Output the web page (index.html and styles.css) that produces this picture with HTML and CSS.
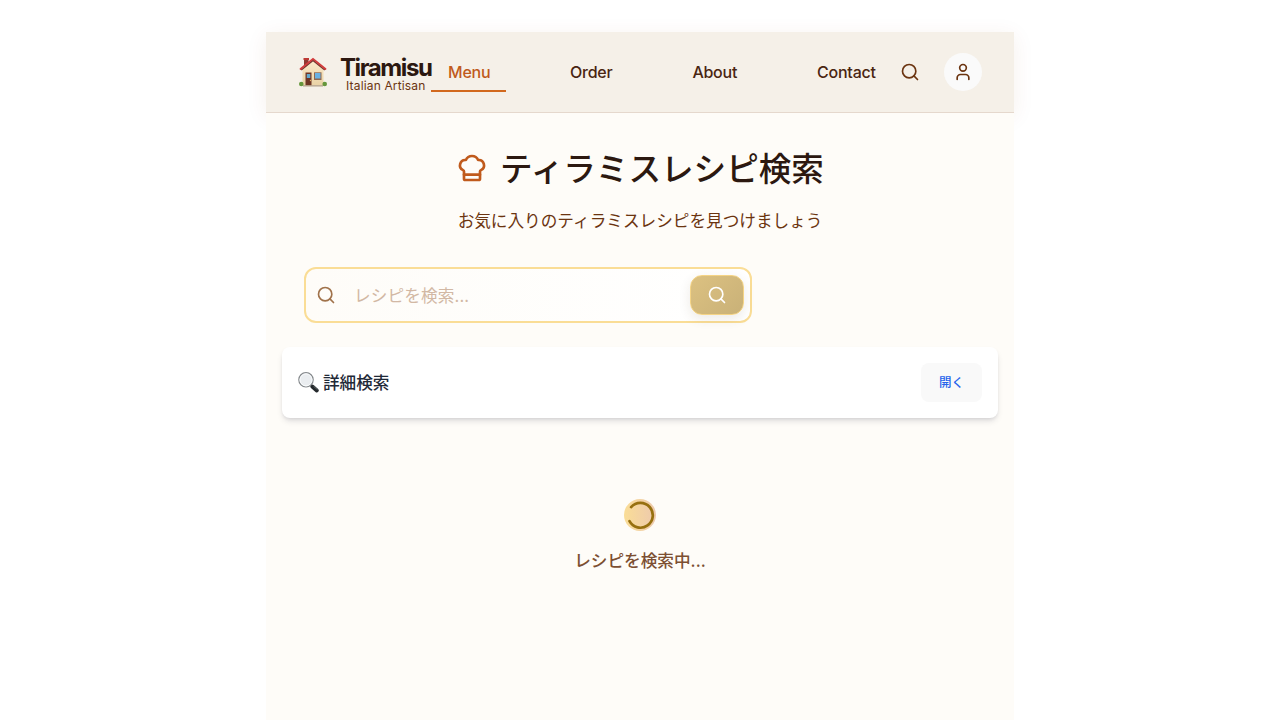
FILE: index.html
```html
<!DOCTYPE html>
<html lang="ja">
<head>
<meta charset="utf-8">
<title>Tiramisu</title>
<link rel="stylesheet" href="styles.css">
</head>
<body>
<div class="page">
  <header class="header">
    <div class="brand">
      <svg class="house" viewBox="0 0 28 30">
        <defs><linearGradient id="wall" x2="0" y2="1"><stop stop-color="#fbeacb"/><stop offset="1" stop-color="#e9d2a5"/></linearGradient></defs>
        <path d="M5 1.500h4.500v8H5z" fill="#8f3a32"/><path d="M4.500 1h5.500v2H4.500z" fill="#bd3a35"/>
        <path d="M3.500 12 14 3l10.500 9v16.500h-21z" fill="url(#wall)"/>
        <path d="M2.200 13 14 3.500 25.800 13" fill="none" stroke="#74372f" stroke-width="1.500"/>
        <path d="M1.500 12 14 1.800 26.500 12" fill="none" stroke="#d23c3c" stroke-width="1.800" stroke-linecap="round"/>
        <path d="M6.500 15.500h6v13h-6z" fill="#6e3525"/><path d="M7.800 17h3.500v4H7.800z" fill="#62a9cf"/><circle cx="11.500" cy="23.500" r=".7" fill="#e6b064"/>
        <path d="M15 15.300h7.500v7.700H15z" fill="#8e674f"/><path d="M16 16h5.500v5.500H16z" fill="#67b0e4"/>
        <path d="M4 28.200h20v1.300H4z" fill="#b3a28b"/>
        <circle cx="2.300" cy="27" r="2.300" fill="#65963c"/><circle cx="25.700" cy="27" r="2.300" fill="#65963c"/>
      </svg>
      <div class="brand-text"><span class="name">Tiramisu</span><span class="tagline">Italian Artisan</span></div>
    </div>
    <nav class="nav">
      <a class="link active">Menu</a><a class="link">Order</a><a class="link">About</a><a class="link">Contact</a>
    </nav>
    <svg class="icon header-search" viewBox="0 0 24 24"><circle cx="11" cy="11" r="8"/><path d="m21 21-4.300-4.300"/></svg>
    <div class="avatar"><svg class="icon" viewBox="0 0 24 24"><circle cx="12" cy="7" r="4"/><path d="M19 21v-2a4 4 0 0 0-4-4H9a4 4 0 0 0-4 4v2"/></svg></div>
  </header>
  <main class="main">
    <div class="title-row">
      <svg class="icon chef" viewBox="0 0 24 24"><path d="M17 21a1 1 0 0 0 1-1v-5.350c0-.457.316-.844.727-1.041a4 4 0 0 0-2.134-7.589 5 5 0 0 0-9.186 0 4 4 0 0 0-2.134 7.588c.411.198.727.585.727 1.041V20a1 1 0 0 0 1 1Z"/><path d="M6 17h12"/></svg>
      <h1 class="title">ティラミスレシピ検索</h1>
    </div>
    <p class="subtitle">お気に入りのティラミスレシピを見つけましょう</p>
    <div class="search">
      <svg class="icon search-icon" viewBox="0 0 24 24"><circle cx="11" cy="11" r="8"/><path d="m21 21-4.300-4.300"/></svg>
      <span class="placeholder">レシピを検索...</span>
      <div class="search-button"><svg class="icon" viewBox="0 0 24 24"><circle cx="11" cy="11" r="8"/><path d="m21 21-4.300-4.300"/></svg></div>
    </div>
    <section class="panel">
      <svg class="lens" viewBox="0 0 22 22">
        <path d="m12.500 12.500 2.500 2.500" stroke="#777" stroke-width="2"/>
        <path d="m14.300 14.500 4.500 4" stroke="#24282b" stroke-width="4" stroke-linecap="round"/><path d="m15.500 14.200 4 3.500" stroke="#687579" stroke-width=".8"/>
        <circle cx="8" cy="7.800" r="7.200" fill="#eaedf0" stroke="#85898c" stroke-width="1.200"/><circle cx="8" cy="7.800" r="6" fill="none" stroke="#fafcfd"/>
      </svg>
      <span class="panel-title">詳細検索</span>
      <span class="open">開く</span>
    </section>
    <div class="loading">
      <div class="spinner"><svg viewBox="0 0 32 32"><path d="M7.100 8.100A12.400 12.400 0 1 1 5.500 22.200" fill="none" stroke="#97700f" stroke-width="2.700" stroke-linecap="round"/></svg></div>
      <span class="loading-text">レシピを検索中...</span>
    </div>
  </main>
</div>
</body>
</html>
```
FILE: styles.css
```css
* { box-sizing: border-box; }
body { margin: 0; background: #fff; font-family: Inter, "Noto Sans CJK JP", sans-serif; overflow: hidden; }
.page { width: 748px; height: 688px; margin: 32px auto 0; background: #fefcf8; }
.icon { display: block; width: 20px; height: 20px; flex: none; fill: none; stroke: currentColor; stroke-width: 2; stroke-linecap: round; stroke-linejoin: round; }
.header { height: 81px; padding: 0 32px 0 33px; display: flex; align-items: center; background: #f5f0e8; border-bottom: 1px solid #e5d8cd; color: #6b3410; box-shadow: 0 4px 20px rgba(139, 69, 19, .08); }
.brand { display: flex; align-items: center; width: 132px; }
.house { width: 28px; height: 30px; margin-right: 13px; flex: none; }
.brand-text { display: flex; flex-direction: column; align-items: center; width: 92px; padding-top: 3px; }
.name { font-size: 24px; line-height: 23px; font-weight: 700; letter-spacing: -1.400px; color: #2c1810; white-space: nowrap; margin-top: 1px; }
.tagline { font-size: 12px; line-height: 14px; letter-spacing: .150px; color: #6b3410; white-space: nowrap; }
.nav { display: flex; gap: 48px; }
.link { height: 40px; padding: 0 16px; line-height: 40px; font-size: 16px; font-weight: 500; letter-spacing: -.250px; color: #4a2511; border-bottom: 2px solid transparent; }
.link.active { width: 75px; padding-left: 17px; letter-spacing: -.200px; color: #c05a1c; border-color: #d2691e; }
.header-search { margin-left: auto; }
.avatar { width: 38px; height: 38px; margin-left: 24px; border-radius: 50%; background: #fafafa; display: flex; align-items: center; justify-content: center; }
.main { position: relative; height: 607px; padding: 32px 16px 0; background: #fefcf8; }
.title-row { height: 48px; display: flex; align-items: center; justify-content: center; gap: 12px; }
.chef { width: 32px; height: 32px; color: #c05a1c; margin-top: -2px; }
.title { margin: 0; font-size: 32.600px; line-height: 48px; font-weight: 500; color: #2c1810; }
.subtitle { margin: 14px 0 0; font-size: 16.640px; line-height: 28px; text-align: center; color: #6b3410; }
.search { width: 448px; height: 56px; margin: 32px 0 0 22px; padding: 0 6px 0 10px; display: flex; align-items: center; border: 2px solid #fadd96; border-radius: 12px; background: linear-gradient(90deg, #fefcf8, #fff); }
.search-icon { color: #a0724a; }
.placeholder { margin-left: 18px; font-size: 16.640px; letter-spacing: .120px; color: #d2b8a4; }
.search-button { width: 54px; height: 40px; margin-left: auto; border: 1px solid #f5d486; border-radius: 12px; background: linear-gradient(135deg, #dcc181, #c9b178); color: #fff; display: flex; align-items: center; justify-content: center; box-shadow: 0 4px 12px rgba(80, 60, 30, .1); }
.panel { height: 71px; margin-top: 24px; padding: 0 16px; display: flex; align-items: center; background: #fff; border-radius: 8px; box-shadow: 0 4px 6px -1px rgba(20, 20, 50, .12), 0 2px 4px -2px rgba(20, 20, 50, .14); }
.lens { width: 22px; height: 22px; margin-right: 3px; fill: none; }
.panel-title { margin-top: -2px; font-size: 16.640px; font-weight: 500; color: #1f2937; }
.open { width: 61px; height: 39px; margin-left: auto; border-radius: 8px; background: #f9f9f9; color: #2563eb; font-size: 12.500px; line-height: 40px; font-weight: 500; text-align: center; }
.loading { margin-top: 81px; display: flex; flex-direction: column; align-items: center; }
.spinner { width: 32px; height: 32px; border-radius: 50%; background: linear-gradient(90deg, #fadd96, #edc9ae); }
.spinner svg { display: block; }
.loading-text { margin-top: 16px; font-size: 16.640px; line-height: 28px; font-weight: 500; color: #7c4f32; }
```
